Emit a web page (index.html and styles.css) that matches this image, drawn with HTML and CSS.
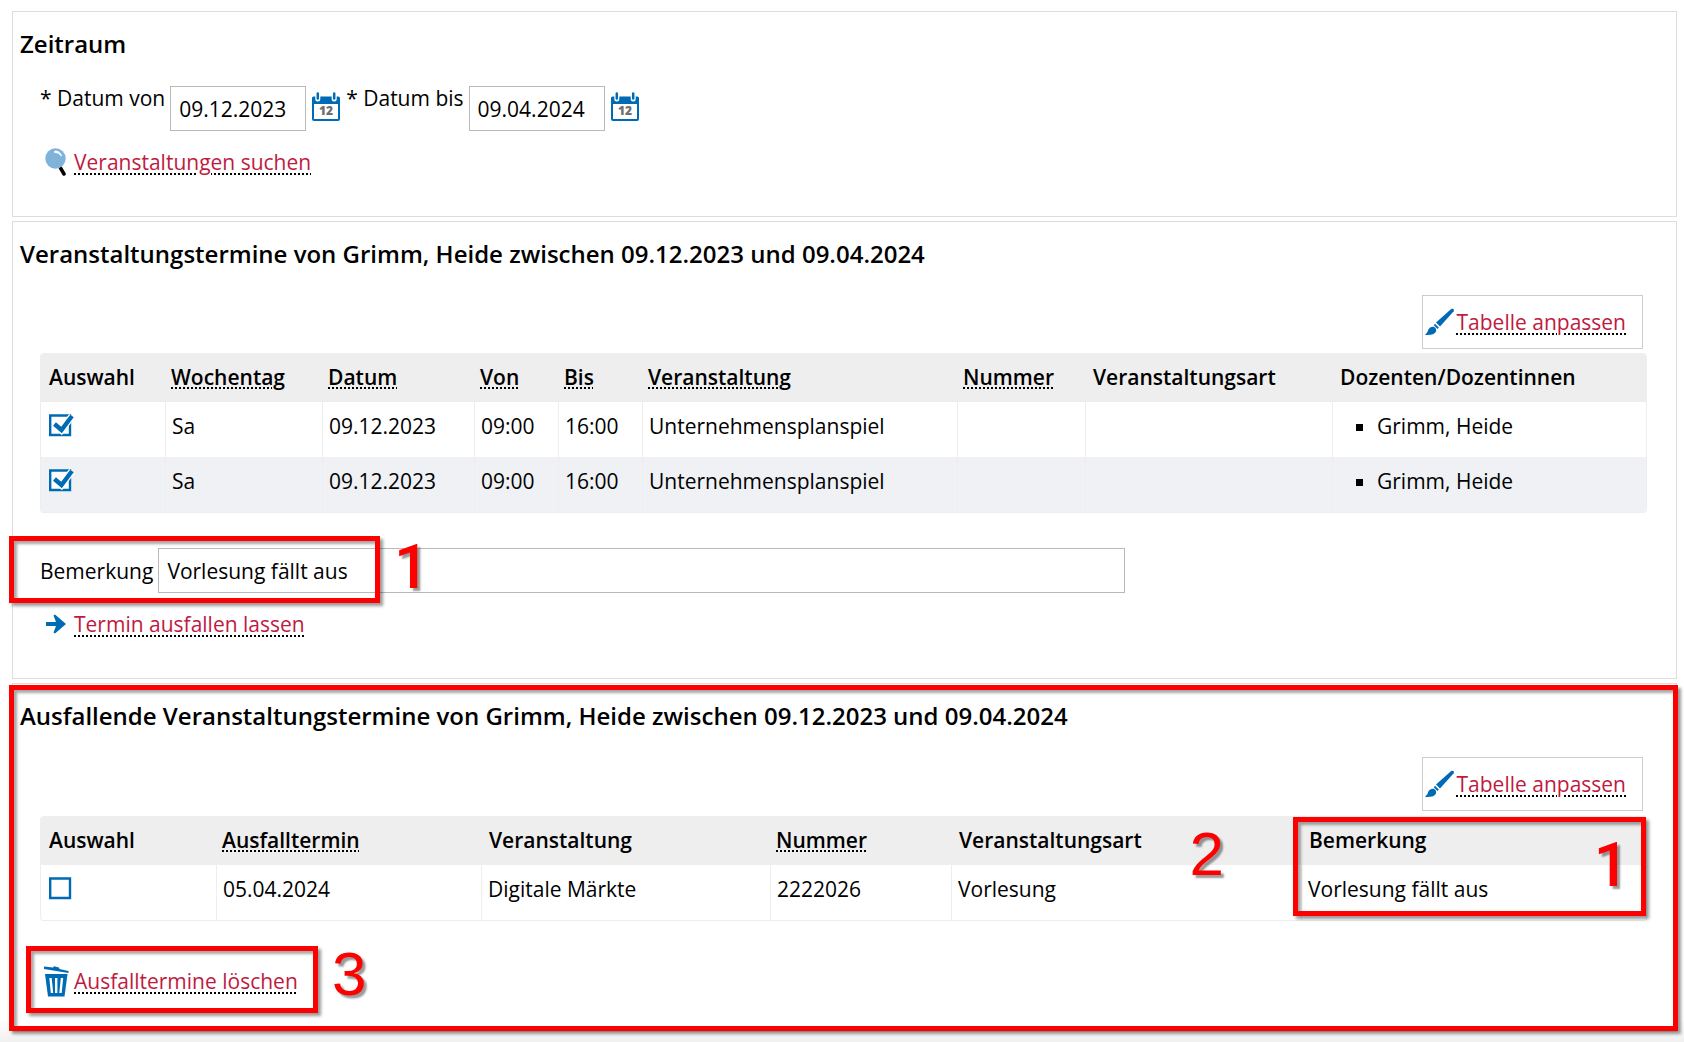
FILE: index.html
```html
<!DOCTYPE html>
<html lang="de">
<head>
<meta charset="utf-8">
<title>Ausfalltermine</title>
<link rel="stylesheet" href="styles.css">
</head>
<body>
<svg class="sprite" aria-hidden="true">
  <symbol id="calendar" viewBox="0 0 28 29">
    <path d="M1.500 4.500H26.500Q28 4.500 28 6V27Q28 29 26 29H2Q0 29 0 27V6Q0 4.500 1.500 4.500Z" fill="#006bb5"/>
    <path d="M2 12H26V27H2Z" fill="#fff"/>
    <path d="M5.800 0V7M22.200 0V7" stroke="#fff" stroke-width="5" stroke-linecap="round"/>
    <path d="M5.800 1.500V6.500M22.200 1.500V6.500" stroke="#006bb5" stroke-width="2.500" stroke-linecap="round"/>
    <text x="14" y="23" text-anchor="middle" class="calendar-day">12</text>
  </symbol>
  <symbol id="search" viewBox="0 0 22 28">
    <path d="M15.500 20L19 26" stroke="#000" stroke-width="3.500" stroke-linecap="round"/>
    <circle cx="10.500" cy="10.500" r="10.200" fill="#7fb3da"/>
    <path d="M10 3Q15 3 16.500 8Q14 4.500 9 4Z" fill="#fff" stroke="#fff"/>
  </symbol>
  <symbol id="brush" viewBox="0 0 30 28">
    <path d="M26.500 0.800Q29.500 0 28.700 3.200L15 18.500L11 14.500Z" fill="#006bb5"/>
    <path d="M10 15.700L13.800 19.500L12.500 21L8.800 17.200Z" fill="#006bb5"/>
    <path d="M0 27Q3 24.500 3.300 21.500Q5 18 9 18.800Q11.700 20.500 11 23.500Q9.500 27.500 0 27Z" fill="#006bb5"/>
  </symbol>
  <symbol id="arrow" viewBox="0 0 20 20">
    <path d="M0 8H10L7.500 1.500L9 0.500L20 10L9 19.500L7.500 18.500L10 12H0Z" fill="#006bb5"/>
  </symbol>
  <symbol id="trash" viewBox="0 0 25 31">
    <path d="M0 0.500L9 1.500L10 0.300L15 1.500L15.500 3L24.500 5V7L0 3Z" fill="#006bb5"/>
    <path d="M1 8H23.500L20.500 30.500H4Z" fill="#006bb5"/>
    <path d="M6.500 12L8 27M12.200 12V27M18 12L16.500 27" stroke="#fff" stroke-width="2.400"/>
  </symbol>
</svg>

<main class="page">
  <section class="card">
    <h2 class="card-title">Zeitraum</h2>
    <form class="period">
      <label class="field-label" for="von">* Datum von</label>
      <input class="text-input date-input" id="von" type="text" value="09.12.2023">
      <button class="icon-button" type="button" aria-label="Kalender öffnen"><svg class="icon-calendar"><use href="#calendar"/></svg></button>
      <label class="field-label" for="bis">* Datum bis</label>
      <input class="text-input date-input" id="bis" type="text" value="09.04.2024">
      <button class="icon-button" type="button" aria-label="Kalender öffnen"><svg class="icon-calendar"><use href="#calendar"/></svg></button>
    </form>
    <div class="action">
      <svg class="icon-action"><use href="#search"/></svg>
      <a class="link" href="#">Veranstaltungen suchen</a>
    </div>
  </section>

  <section class="card">
    <h2 class="card-title">Veranstaltungstermine von Grimm, Heide zwischen 09.12.2023 und 09.04.2024</h2>
    <div class="toolbar">
      <div class="customize">
        <svg class="icon-brush"><use href="#brush"/></svg>
        <a class="link" href="#">Tabelle anpassen</a>
      </div>
    </div>
    <table class="grid">
      <colgroup>
        <col class="c-select"><col class="c-day"><col class="c-date"><col class="c-time"><col class="c-time"><col class="c-event"><col class="c-number"><col class="c-type"><col>
      </colgroup>
      <thead>
        <tr>
          <th>Auswahl</th>
          <th><a class="sort" href="#">Wochentag</a></th>
          <th><a class="sort" href="#">Datum</a></th>
          <th><a class="sort" href="#">Von</a></th>
          <th><a class="sort" href="#">Bis</a></th>
          <th><a class="sort" href="#">Veranstaltung</a></th>
          <th><a class="sort" href="#">Nummer</a></th>
          <th>Veranstaltungsart</th>
          <th>Dozenten/Dozentinnen</th>
        </tr>
      </thead>
      <tbody>
        <tr>
          <td><input class="check" type="checkbox" aria-label="Termin auswählen" checked></td>
          <td>Sa</td><td>09.12.2023</td><td>09:00</td><td>16:00</td><td>Unternehmensplanspiel</td><td></td><td></td>
          <td><ul class="lecturers"><li>Grimm, Heide</li></ul></td>
        </tr>
        <tr>
          <td><input class="check" type="checkbox" aria-label="Termin auswählen" checked></td>
          <td>Sa</td><td>09.12.2023</td><td>09:00</td><td>16:00</td><td>Unternehmensplanspiel</td><td></td><td></td>
          <td><ul class="lecturers"><li>Grimm, Heide</li></ul></td>
        </tr>
      </tbody>
    </table>
    <div class="remark">
      <label for="bemerkung">Bemerkung</label>
      <input class="text-input remark-input" id="bemerkung" type="text" value="Vorlesung fällt aus">
      <div class="mark mark-remark"><span class="digit digit-one digit-outside">1</span></div>
    </div>
    <div class="action">
      <svg class="icon-arrow"><use href="#arrow"/></svg>
      <a class="link" href="#">Termin ausfallen lassen</a>
    </div>
  </section>

  <section class="card card-cancelled">
    <h2 class="card-title">Ausfallende Veranstaltungstermine von Grimm, Heide zwischen 09.12.2023 und 09.04.2024</h2>
    <div class="toolbar">
      <div class="customize">
        <svg class="icon-brush"><use href="#brush"/></svg>
        <a class="link" href="#">Tabelle anpassen</a>
      </div>
    </div>
    <div class="grid-wrap">
      <table class="grid">
        <colgroup>
          <col class="d-select"><col class="d-date"><col class="d-event"><col class="d-number"><col class="d-type"><col>
        </colgroup>
        <thead>
          <tr>
            <th>Auswahl</th>
            <th><a class="sort" href="#">Ausfalltermin</a></th>
            <th>Veranstaltung</th>
            <th><a class="sort" href="#">Nummer</a></th>
            <th>Veranstaltungsart</th>
            <th>Bemerkung</th>
          </tr>
        </thead>
        <tbody>
          <tr>
            <td><input class="check" type="checkbox" aria-label="Ausfalltermin auswählen"></td>
            <td>05.04.2024</td><td>Digitale Märkte</td><td>2222026</td><td>Vorlesung</td><td>Vorlesung fällt aus</td>
          </tr>
        </tbody>
      </table>
      <div class="mark mark-column"><span class="digit digit-before">2</span><span class="digit digit-one digit-inside">1</span></div>
    </div>
    <div class="action action-delete">
      <svg class="icon-trash"><use href="#trash"/></svg>
      <a class="link" href="#">Ausfalltermine löschen</a>
      <div class="mark mark-delete"><span class="digit digit-outside">3</span></div>
    </div>
    <div class="mark mark-card"></div>
  </section>
</main>
</body>
</html>
```
FILE: styles.css
```css
* {
  box-sizing: border-box;
}

body {
  margin: 0;
  background: #fff;
  color: #000;
  font: 21px/28px "Open Sans", "Noto Sans", sans-serif;
}

.sprite {
  display: none;
}

.calendar-day {
  font: 800 12px "Open Sans", sans-serif;
  fill: #6f6f6f;
}

.page {
  display: flex;
  flex-direction: column;
  gap: 4px;
  padding: 11px 7px 11px 12px;
  background: linear-gradient(#fff, #f0f0f0) bottom / 100% 24px no-repeat;
}

.card {
  position: relative;
  padding: 16px 29px 40px 27px;
  border: 1px solid #ddd;
  background: #fff;
}

.card-cancelled {
  padding-bottom: 36px;
}

.card-title {
  margin: 0 0 0 -20px;
  font-size: 24px;
  line-height: 32px;
  font-weight: 600;
}

.period {
  display: flex;
  align-items: flex-start;
  margin: 26px 0 17px;
}

.field-label {
  margin-right: 5px;
  line-height: 24px;
}

.text-input {
  height: 45px;
  padding: 0 8px;
  border: 1px solid #b9b9b9;
  background: #fff;
  color: #000;
  font: inherit;
}

.date-input {
  width: 136px;
}

.icon-button {
  display: block;
  margin: 6px 6px 0;
  padding: 0;
  border: 0;
  background: none;
}

.icon-calendar {
  display: block;
  width: 28px;
  height: 29px;
}

.link {
  color: #c01a40;
  text-decoration: underline dotted #000 2px;
  text-underline-offset: 3px;
}

.sort {
  margin-left: -2px;
  color: inherit;
  text-decoration: underline dotted #000 2px;
  text-underline-offset: 3px;
}

.action {
  position: relative;
  display: flex;
  align-items: center;
  height: 28px;
}

.icon-action {
  width: 22px;
  height: 28px;
  margin: 0 7px 0 5px;
}

.icon-arrow {
  width: 20px;
  height: 20px;
  margin: 0 8px 0 6px;
}

.icon-trash {
  width: 25px;
  height: 31px;
  margin: 0 5px 0 4px;
}

.toolbar {
  display: flex;
  justify-content: flex-end;
  margin: 25px 4px 4px 0;
}

.card-cancelled .toolbar {
  margin-bottom: 5px;
}

.customize {
  display: flex;
  align-items: center;
  height: 54px;
  padding: 0 16px 0 2px;
  border: 1px solid #ccc;
}

.icon-brush {
  width: 30px;
  height: 28px;
  margin-right: 2px;
}

.grid-wrap {
  position: relative;
}

.grid {
  width: 100%;
  table-layout: fixed;
  border-collapse: separate;
  border-spacing: 0;
  border: 1px solid #eee;
  border-top: 0;
  border-radius: 4px;
  overflow: hidden;
}

.grid th {
  height: 49px;
  padding: 0 8px 2px;
  background: #eee;
  font-weight: 600;
  text-align: left;
  white-space: nowrap;
}

.grid td {
  height: 55px;
  padding: 10px 6px;
  border-left: 1px solid #eee;
  vertical-align: top;
}

.grid td:first-child {
  border-left: 0;
  padding-left: 8px;
}

.grid tbody tr:nth-child(even) {
  background: #eff1f5;
}

.c-select { width: 124px; }
.c-day { width: 157px; }
.c-date { width: 152px; }
.c-time { width: 84px; }
.c-event { width: 315px; }
.c-number { width: 128px; }
.c-type { width: 247px; }

.d-select { width: 175px; }
.d-date { width: 265px; }
.d-event { width: 289px; }
.d-number { width: 181px; }
.d-type { width: 350px; }

.lecturers {
  margin: 0;
  padding-left: 38px;
  list-style: square;
}

.check {
  appearance: none;
  display: block;
  width: 26px;
  height: 24px;
  margin: 1px 0 0;
  background: url("data:image/svg+xml,%3Csvg xmlns='http://www.w3.org/2000/svg' width='26' height='24'%3E%3Cpath d='M1.200 2.500H21V22H1.200Z' fill='%23fff' stroke='%23006bb5' stroke-width='2.400'/%3E%3C/svg%3E") no-repeat;
}

.check:checked {
  background-image: url("data:image/svg+xml,%3Csvg xmlns='http://www.w3.org/2000/svg' width='26' height='24'%3E%3Cpath d='M1.200 2.500H21V22H1.200Z' fill='%23fff' stroke='%23006bb5' stroke-width='2.400'/%3E%3Cpath d='M6 11L12.500 17L23 3' fill='none' stroke='%23fff' stroke-width='7'/%3E%3Cpath d='M5.500 11L12.500 17L23 3' fill='none' stroke='%23006bb5' stroke-width='4.400'/%3E%3C/svg%3E");
}

.remark {
  position: relative;
  display: flex;
  align-items: center;
  gap: 5px;
  margin: 35px 0 17px;
}

.remark-input {
  width: 967px;
}

.action-delete {
  margin-top: 46px;
}

/* Red annotation frames and their numbers */
.mark {
  position: absolute;
  border: 5px solid #f00;
  box-shadow: 3px 3px 3px rgba(0, 0, 0, 0.4), inset 3px 3px 3px rgba(0, 0, 0, 0.35);
  pointer-events: none;
}

.mark-remark {
  top: -12px;
  left: -31px;
  width: 371px;
  height: 67px;
}

.mark-column {
  top: 1px;
  right: 1px;
  width: 353px;
  height: 99px;
}

.mark-delete {
  top: -21px;
  left: -14px;
  width: 292px;
  height: 67px;
}

.mark-card {
  inset: 1px -2px 0 -4px;
}

.digit {
  position: absolute;
  color: #f00;
  font: 62px/62px "Liberation Sans", Arial, sans-serif;
  text-shadow: 3px 3px 2px rgba(0, 0, 0, 0.4);
}

.digit-one {
  padding-top: 3px;
  font-family: Roboto, Arial, sans-serif;
  font-weight: 500;
}

.digit-outside {
  top: -8px;
  left: 100%;
  margin-left: 19px;
}

.digit-before {
  top: 1px;
  right: 100%;
  margin-right: 74px;
}

.digit-inside {
  top: 9px;
  right: 12px;
}
```
